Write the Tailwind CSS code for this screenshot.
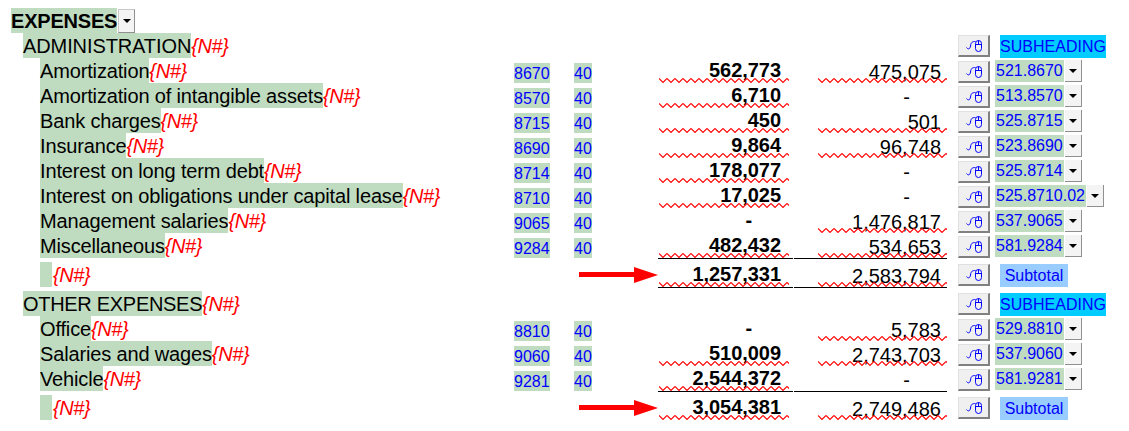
<!DOCTYPE html>
<html lang="en">
<head>
  <meta charset="UTF-8" />
  <title>Expenses</title>
  <script src="https://cdn.jsdelivr.net/npm/@tailwindcss/browser@4"></script>
</head>
<body class="bg-white overflow-hidden font-['Liberation_Sans',Arial,sans-serif] text-[20px] leading-[25px] text-black">
  <svg width="0" height="0" class="absolute">
    <defs>
      <pattern id="wave" width="8" height="5" patternUnits="userSpaceOnUse">
        <path d="M0 0.5 L4 4.5 L8 0.5" fill="none" stroke="#ff0000" stroke-width="1.1" />
      </pattern>
      <symbol id="mouse" viewBox="0 0 16 14">
        <path d="M0.5 8.5 C2 10.5 4 10.5 4.5 7 C5 3 6.5 2.5 9.5 2.5" fill="none" stroke="#0000ff" />
        <rect x="9.5" y="1.5" width="6" height="11" rx="3" fill="none" stroke="#0000ff" />
        <path d="M9.5 5.5 H15.5 M12.5 1.5 V5.5" fill="none" stroke="#0000ff" />
      </symbol>
    </defs>
  </svg>

  <div id="sheet" class="pt-2"></div>

  <script>
    const tag = `<span class="text-[#ff0000] italic tracking-[-0.4px]">{N#}</span>`;
    const wave = (cls) => `<svg class="absolute bottom-0 ${cls} h-[5px]"><rect width="100%" height="5" fill="url(#wave)" /></svg>`;
    const mouseBtn = `<div class="w-[32px] h-[22px] bg-[#f0f0f0] border-t border-l border-t-[#e0e0e0] border-l-[#e0e0e0] border-r-2 border-b-2 border-r-[#808080] border-b-[#808080] flex items-center justify-center"><svg class="w-4 h-[14px]"><use href="#mouse" /></svg></div>`;
    const ddBtn = `<div class="w-[17px] h-[22px] bg-[#f4f4f4] border-r border-b border-r-[#909090] border-b-[#909090] flex items-center justify-center"><div class="w-0 h-0 border-x-[4px] border-x-transparent border-t-[4px] border-t-black"></div></div>`;

    // amount and prior cells: "-" sits further left, wave only under real numbers
    function amount(v, line, short) {
      const hasNum = v !== "-";
      return `<div class="relative w-[135px] h-[25px] font-bold text-right tracking-[-0.05px] ${v === "-" ? "pr-[41px]" : "pr-[12px]"}">${v}
        ${hasNum ? wave("left-[1px] w-[130px]") : ""}
        ${line ? `<div class="absolute bottom-[-1px] h-[1px] bg-black ${short ? "left-[1px] w-[130px]" : "left-0 right-0"}"></div>` : ""}</div>`;
    }
    function prior(v, line, short) {
      const hasNum = v !== "-";
      return `<div class="relative w-[154px] h-[25px] text-right pt-[2px] ${v === "-" ? "pr-[37px]" : "pr-[6px]"}">${v}
        ${hasNum ? wave("left-[25px] w-[129px]") : ""}
        ${line ? `<div class="absolute bottom-[-1px] h-[1px] bg-black ${short ? "left-[25px] right-0" : "left-[1px] right-0"}"></div>` : ""}</div>`;
    }

    function row(name, code, amt, pri, acct, line) {
      return `<div class="flex h-[25px]">
        <div class="w-[514px] pl-[40px] whitespace-nowrap leading-[27px]"><span class="bg-[#c0dcc0] inline-block h-[25px] tracking-[-0.15px]">${name}</span>${tag}</div>
        <div class="w-[60px] pt-[5px]"><div class="w-[36px] h-[20px] bg-[#c0dcc0] text-[#0000ff] text-[16px] leading-[21px]">${code}</div></div>
        <div class="w-[84px] pt-[5px]"><div class="w-[18px] h-[20px] bg-[#c0dcc0] text-[#0000ff] text-[16px] leading-[21px]">40</div></div>
        ${amount(amt, line)}${prior(pri, line)}
        <div class="w-[11px]"></div>
        <div class="pt-[3px]">${mouseBtn}</div>
        <div class="w-[5px]"></div>
        <div class="flex items-start pt-[2px] gap-[1px]"><div class="h-[22px] px-[1px] bg-[#c0dcc0] text-[#0000ff] text-[16px] leading-[22px]">${acct}</div>${ddBtn}</div>
      </div>`;
    }
    function heading(name, extra) {
      return `<div class="flex h-[25px] ${extra}">
        <div class="w-[947px] pl-[23px] whitespace-nowrap leading-[27px]"><span class="bg-[#c0dcc0] inline-block h-[25px]">${name}</span>${tag}</div>
        <div class="w-[11px]"></div>
        <div class="pt-[2px]">${mouseBtn}</div>
        <div class="w-[10px]"></div>
        <div class="mt-[2px] h-[23px] w-[106px] bg-[#00ccff] text-[#0000ff] text-[16px] leading-[23px] tracking-normal text-center">SUBHEADING</div>
      </div>`;
    }
    function subtotal(amt, pri, short) {
      return `<div class="flex h-[25px] mt-1">
        <div class="w-[574px] pl-[40px] whitespace-nowrap flex leading-[27px]"><span class="bg-[#c0dcc0] w-[12px] h-[25px]"></span><span class="ml-[1px]">${tag}</span></div>
        <div class="w-[84px] flex items-center pl-[5px]">
          <div class="w-[55px] h-[5px] bg-[#ff0000]"></div>
          <div class="w-0 h-0 border-y-[8px] border-y-transparent border-l-[24px] border-l-[#ff0000]"></div>
        </div>
        ${amount(amt, true, short)}${prior(pri, true, short)}
        <div class="w-[11px]"></div>
        <div class="pt-[2px]">${mouseBtn}</div>
        <div class="w-[10px]"></div>
        <div class="mt-[2px] h-[23px] w-[68px] bg-[#99ccff] text-[#0000ff] text-[16px] leading-[23px] text-center">Subtotal</div>
      </div>`;
    }

    document.getElementById("sheet").innerHTML = [
      `<div class="flex h-[25px] pl-[11px] leading-[27px]"><span class="bg-[#c0dcc0] font-bold inline-block h-[25px] tracking-[-0.2px]">EXPENSES</span>
        <div class="ml-[1px] mt-[1px] w-[17px] h-[24px] bg-[#f4f4f4] border border-[#c8c8c8] border-r-[#909090] border-b-[#909090] flex items-center justify-center"><div class="w-0 h-0 border-x-[4px] border-x-transparent border-t-[4px] border-t-black"></div></div></div>`,
      heading("ADMINISTRATION", "tracking-[-0.1px]"),
      row("Amortization", "8670", "562,773", "475,075", "521.8670"),
      row("Amortization of intangible assets", "8570", "6,710", "-", "513.8570"),
      row("Bank charges", "8715", "450", "501", "525.8715"),
      row("Insurance", "8690", "9,864", "96,748", "523.8690"),
      row("Interest on long term debt", "8714", "178,077", "-", "525.8714"),
      row("Interest on obligations under capital lease", "8710", "17,025", "-", "525.8710.02"),
      row("Management salaries", "9065", "-", "1,476,817", "537.9065"),
      row("Miscellaneous", "9284", "482,432", "534,653", "581.9284", true),
      subtotal("1,257,331", "2,583,794"),
      heading("OTHER EXPENSES", "mt-1 tracking-[-0.3px]"),
      row("Office", "8810", "-", "5,783", "529.8810"),
      row("Salaries and wages", "9060", "510,009", "2,743,703", "537.9060"),
      row("Vehicle", "9281", "2,544,372", "-", "581.9281", true),
      subtotal("3,054,381", "2,749,486", true),
    ].join("");
  </script>
</body>
</html>
